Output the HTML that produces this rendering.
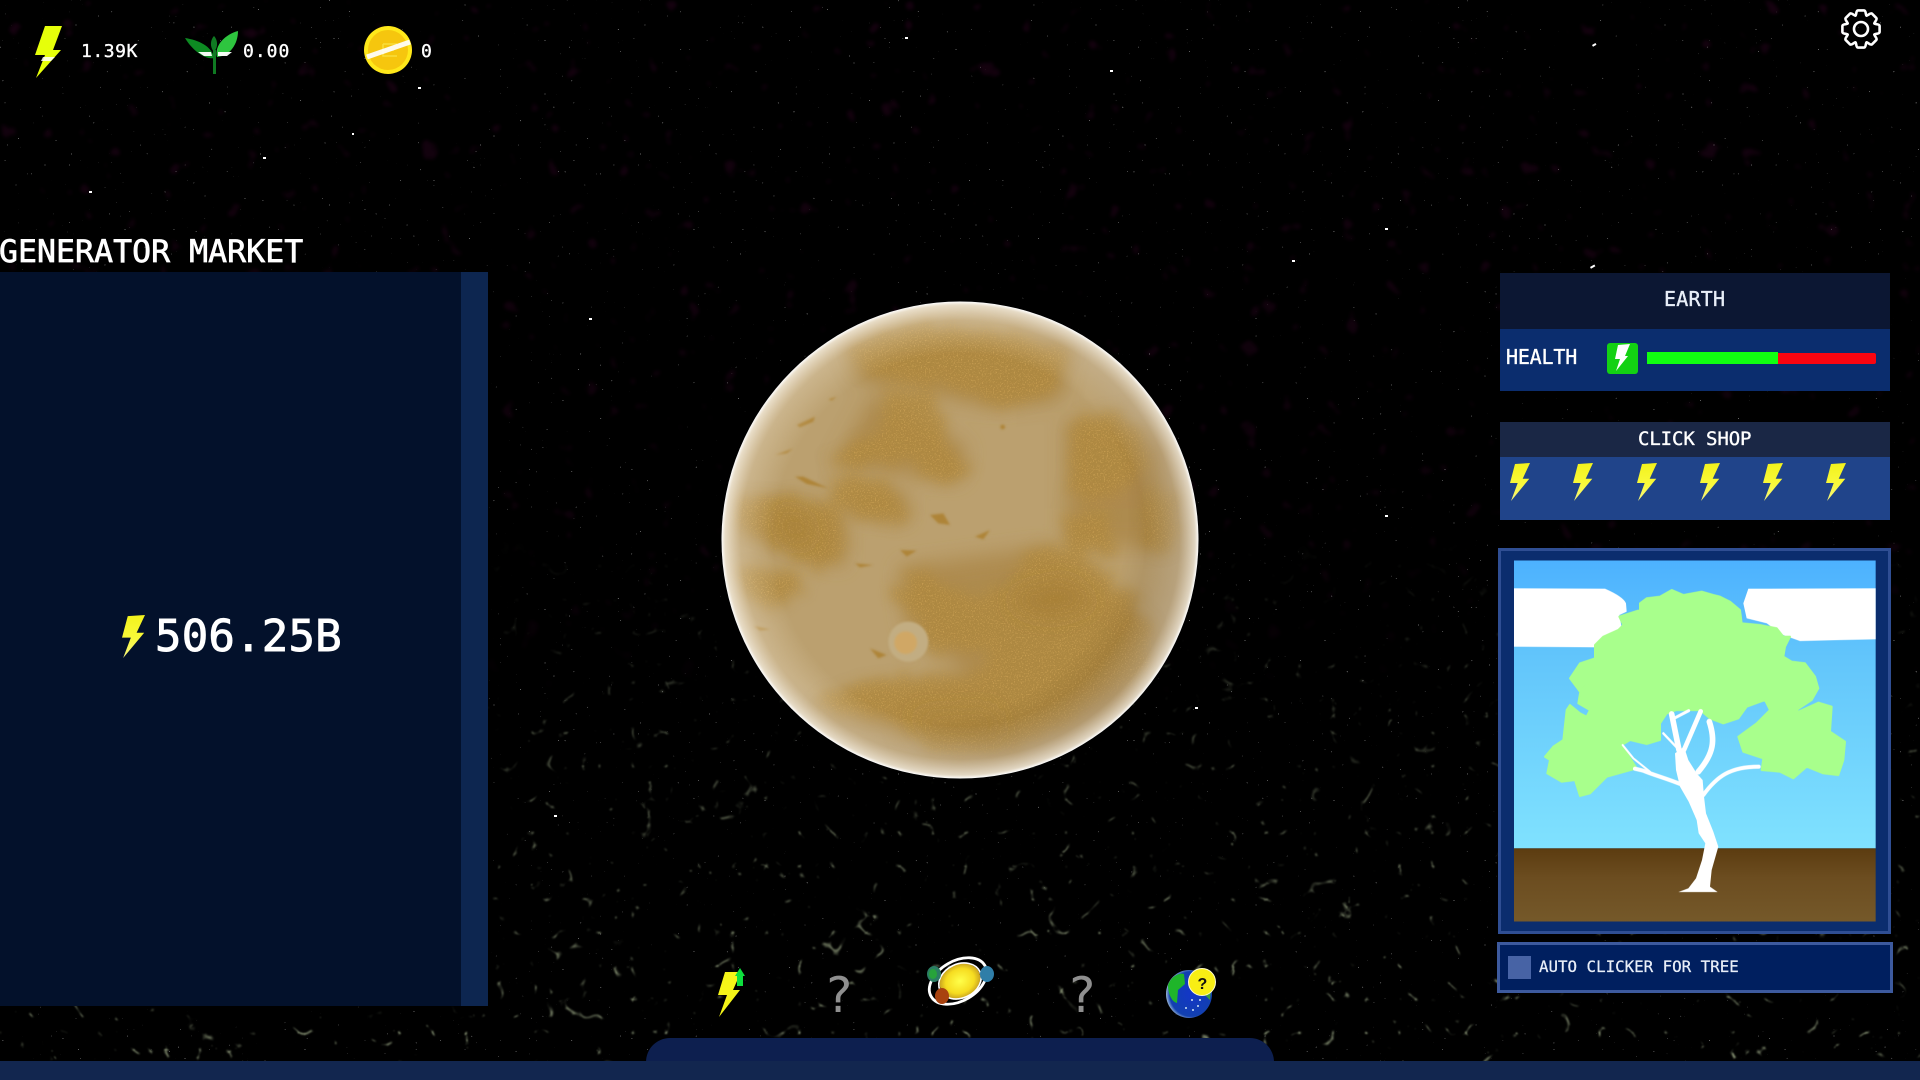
<!DOCTYPE html>
<html lang="en">
<head>
<meta charset="utf-8">
<title>Planet Clicker</title>
<style>
html,body{margin:0;padding:0;width:1920px;height:1080px;overflow:hidden;background:#000}
.a{position:absolute}
svg{position:absolute;left:0;top:0}
text{font-family:"DejaVu Sans Mono","Liberation Mono",monospace;fill:#fff}
.t{stroke:#fff;stroke-width:.35}
</style>
</head>
<body>
<svg width="1920" height="1080" viewBox="0 0 1920 1080" style="z-index:0">
<defs>
<filter id="veins" x="0" y="0" width="1" height="1" filterUnits="objectBoundingBox" color-interpolation-filters="sRGB">
<feTurbulence type="turbulence" baseFrequency=".03" numOctaves="2" seed="7" result="t"/>
<feColorMatrix in="t" type="matrix" values="0 0 0 0 .72  0 0 0 0 .78  0 0 0 0 .62  -16 0 0 0 1.1" result="v"/>
<feTurbulence type="fractalNoise" baseFrequency=".05" numOctaves="2" seed="11"/>
<feColorMatrix type="matrix" values="0 0 0 0 1  0 0 0 0 1  0 0 0 0 1  10 0 0 0 -5.2" result="p"/>
<feComposite in="v" in2="p" operator="in"/>
<feGaussianBlur stdDeviation=".7"/>
</filter>
<filter id="mag" x="0" y="0" width="1" height="1" color-interpolation-filters="sRGB">
<feTurbulence type="fractalNoise" baseFrequency=".05" numOctaves="2" seed="3"/>
<feColorMatrix type="matrix" values="0 0 0 0 .3  0 0 0 0 .03  0 0 0 0 .22  10 0 0 0 -7"/>
<feGaussianBlur stdDeviation="1.5"/>
</filter>
<filter id="spk" x="0" y="0" width="1" height="1" color-interpolation-filters="sRGB">
<feTurbulence type="fractalNoise" baseFrequency=".45" numOctaves="1" seed="21"/>
<feColorMatrix type="matrix" values="0 0 0 0 1  0 0 0 0 1  0 0 0 0 1  30 0 0 0 -23"/>
</filter>
<linearGradient id="fadeLow" x1="0" y1="0" x2="0" y2="1">
<stop offset=".5" stop-color="#000"/><stop offset=".7" stop-color="#888"/><stop offset="1" stop-color="#fff"/>
</linearGradient>
<linearGradient id="fadeHigh" x1="0" y1="0" x2="0" y2="1">
<stop offset="0" stop-color="#fff"/><stop offset=".5" stop-color="#aaa"/><stop offset=".65" stop-color="#000"/>
</linearGradient>
<mask id="mLow" maskUnits="userSpaceOnUse" x="0" y="0" width="1920" height="1080"><rect width="1920" height="1080" fill="url(#fadeLow)"/></mask>
<mask id="mHigh" maskUnits="userSpaceOnUse" x="0" y="0" width="1920" height="1080"><rect width="1920" height="1080" fill="url(#fadeHigh)"/></mask>
</defs>
<rect width="1920" height="1080" fill="#000"/>
<g mask="url(#mHigh)"><rect width="1920" height="1080" fill="#000" filter="url(#mag)" opacity=".28"/></g>
<g mask="url(#mLow)"><rect width="1920" height="1080" fill="#000" filter="url(#veins)" opacity=".7"/></g>
<rect width="1920" height="1080" fill="#000" filter="url(#spk)" opacity=".4"/>
<g fill="#fff">
<rect x="89" y="191" width="3" height="2"/><rect x="263" y="157" width="3" height="2"/><rect x="418" y="87" width="3" height="2"/><rect x="352" y="133" width="2" height="2"/>
<rect x="1592" y="45" width="4" height="2" transform="rotate(-30 1592 45)"/><rect x="1590" y="267" width="5" height="2" transform="rotate(-30 1590 267)"/><rect x="1292" y="260" width="3" height="2"/><rect x="1385" y="228" width="3" height="2"/>
<rect x="589" y="318" width="3" height="2"/><rect x="1385" y="515" width="3" height="2"/><rect x="554" y="815" width="3" height="2"/><rect x="1195" y="707" width="3" height="2"/><rect x="905" y="37" width="3" height="2"/><rect x="1110" y="70" width="3" height="2"/>
</g>
</svg>

<div class="a" style="left:0;top:272px;width:461px;height:734px;background:#03112b;z-index:1"></div>
<div class="a" style="left:461px;top:272px;width:27px;height:734px;background:#0d2650;z-index:1"></div>

<div class="a" style="left:1500px;top:273px;width:390px;height:56px;background:#0c1733;z-index:1"></div>
<div class="a" style="left:1500px;top:329px;width:390px;height:62px;background:#0b2d6e;z-index:1"></div>
<div class="a" style="left:1607px;top:343px;width:31px;height:31px;background:#13d113;border-radius:3px;z-index:1"></div>
<div class="a" style="left:1647px;top:352px;width:131px;height:12px;background:#11ff11;z-index:1"></div>
<div class="a" style="left:1778px;top:353px;width:98px;height:11px;background:#fa0510;border-radius:0 2px 2px 0;z-index:1"></div>

<div class="a" style="left:1500px;top:422px;width:390px;height:35px;background:#1a2745;z-index:1"></div>
<div class="a" style="left:1500px;top:457px;width:390px;height:63px;background:#20448a;z-index:1"></div>

<div class="a" style="left:1498px;top:548px;width:387px;height:380px;background:#0b2d6e;border:3px solid #2f4e93;z-index:1"></div>
<div class="a" style="left:1497px;top:942px;width:390px;height:45px;background:#001f5f;border:3px solid #3d5a9e;z-index:1"></div>
<div class="a" style="left:1508px;top:956px;width:23px;height:23px;background:#4763a5;z-index:1"></div>

<div class="a" style="left:646px;top:1038px;width:628px;height:30px;background:#0d1f4f;border-radius:24px 24px 0 0;z-index:1"></div>
<div class="a" style="left:0;top:1061px;width:1920px;height:19px;background:#12264f;z-index:1"></div>

<svg width="1920" height="1080" viewBox="0 0 1920 1080" style="z-index:2">
<defs>
<linearGradient id="by" x1="0" y1="0" x2="0" y2="1"><stop offset="0" stop-color="#f2f21c"/><stop offset=".55" stop-color="#f9f93a"/><stop offset="1" stop-color="#f6f680"/></linearGradient>
<polygon id="bolt" points="5,1 20,0 12.7,15.7 19.3,15.7 1,38 7.7,20 0,20"/>
<linearGradient id="sky" x1="0" y1="0" x2="0" y2="1"><stop offset="0" stop-color="#4db2ff"/><stop offset=".35" stop-color="#63c6fb"/><stop offset="1" stop-color="#80e2ff"/></linearGradient>
<linearGradient id="soil" x1="0" y1="0" x2="0" y2="1"><stop offset="0" stop-color="#5c3c10"/><stop offset=".4" stop-color="#6c4d20"/><stop offset="1" stop-color="#75592a"/></linearGradient>
<radialGradient id="rim" cx=".5" cy=".5" r=".5">
<stop offset="0" stop-color="#fff" stop-opacity="0"/><stop offset=".78" stop-color="#f2e6cf" stop-opacity="0"/><stop offset=".92" stop-color="#efe3ce" stop-opacity=".3"/><stop offset=".985" stop-color="#f8f2e6" stop-opacity=".75"/><stop offset="1" stop-color="#fff" stop-opacity="1"/>
</radialGradient>
<radialGradient id="shade" cx=".42" cy=".45" r=".6">
<stop offset="0" stop-color="#000" stop-opacity="0"/><stop offset=".72" stop-color="#3a2208" stop-opacity="0"/><stop offset="1" stop-color="#3a2208" stop-opacity=".3"/>
</radialGradient>
<filter id="rough" x="-10%" y="-10%" width="120%" height="120%" color-interpolation-filters="sRGB">
<feTurbulence type="fractalNoise" baseFrequency=".03" numOctaves="4" seed="4" result="n"/>
<feDisplacementMap in="SourceGraphic" in2="n" scale="90" xChannelSelector="R" yChannelSelector="G"/>
<feGaussianBlur stdDeviation="19" result="b"/>
<feTurbulence type="fractalNoise" baseFrequency=".24" numOctaves="2" seed="9"/>
<feColorMatrix type="matrix" values="0 0 0 0 .8  0 0 0 0 .63  0 0 0 0 .32  5 0 0 0 -2.7"/>
<feComposite in2="b" operator="in" result="s"/>
<feMerge><feMergeNode in="b"/><feMergeNode in="s"/></feMerge>
</filter>
<filter id="soft" x="-30%" y="-30%" width="160%" height="160%"><feGaussianBlur stdDeviation="30"/></filter>
<filter id="st" x="-30%" y="-30%" width="160%" height="160%"><feGaussianBlur stdDeviation="3.5"/></filter>
<clipPath id="pc"><circle cx="960" cy="540" r="238"/></clipPath>
<radialGradient id="sun"><stop offset="0" stop-color="#ffff4a"/><stop offset=".7" stop-color="#f6dc20"/><stop offset="1" stop-color="#c9a320"/></radialGradient>
<radialGradient id="ea" cx=".55" cy=".5" r=".55"><stop offset="0" stop-color="#1336c8"/><stop offset=".85" stop-color="#1240b0"/><stop offset="1" stop-color="#9bb8d8"/></radialGradient>
</defs>

<!-- planet -->
<circle cx="960" cy="540" r="238" fill="#bba06f"/>
<g clip-path="url(#pc)">
<g transform="translate(700 280) scale(.33333)">
<g fill="#ad8a4e" filter="url(#soft)" opacity=".95">
<path d="M420 180 L1120 180 L1080 360 L880 380 L480 300Z"/>
<path d="M520 340 L800 500 L780 600 L400 560Z"/>
<path d="M120 660 L430 700 L430 860 L120 760Z"/>
<path d="M1100 420 L1400 480 L1400 800 L1100 800Z"/>
<path d="M600 860 L1040 800 L1340 1030 L1300 1280 L900 1420 L360 1300 L800 1180 L620 1040Z"/>
<path d="M420 620 L620 640 L620 720 L440 700Z"/>
</g>
<g fill="#ae883f" stroke="#ae883f" stroke-width="34" stroke-linejoin="round" filter="url(#rough)" opacity=".82">
<path d="M470 200 L640 150 L900 170 L1090 230 L1040 330 L900 360 L780 310 L600 290 L480 250Z"/>
<path d="M570 350 L690 350 L730 500 L790 570 L730 590 L620 530 L410 540 L560 470Z"/>
<path d="M420 610 L540 620 L620 710 L480 700 L400 650Z"/>
<path d="M130 680 L260 660 L400 700 L420 820 L350 850 L240 790 L130 720Z"/>
<path d="M130 880 L270 890 L300 930 L230 970 L140 930Z"/>
<path d="M1140 430 L1260 410 L1330 520 L1290 600 L1170 650 L1120 620Z"/>
<path d="M1100 720 L1210 700 L1220 800 L1110 790Z"/>
<path d="M1360 620 L1420 680 L1410 800 L1340 790Z"/>
<path d="M1000 820 L1130 820 L1280 960 L1300 1050 L1340 1030 L1330 1160 L1200 1230 L1080 1320 L900 1400 L700 1400 L560 1300 L370 1270 L530 1210 L810 1210 L880 1170 L890 1110 L700 1090 L680 1040 L600 950 L650 890 L820 980 L940 920Z"/>
</g>
<g fill="#a37c34" filter="url(#soft)">
<path d="M940 940 L1100 900 L1180 970 L1060 1010 L960 990Z" opacity=".6"/>
<path d="M230 690 L310 700 L340 790 L260 790Z" opacity=".5"/>
<path d="M640 1300 L880 1290 L900 1370 L700 1370Z" opacity=".4"/>
</g>
<g fill="#ae8438" filter="url(#st)">
<path d="M290 435 L345 410 L340 425 L300 442Z"/><path d="M225 525 L280 505 L260 520Z"/><path d="M285 590 L310 590 L385 625 L320 612Z"/><path d="M825 770 L870 750 L850 778Z"/><path d="M690 705 L730 700 L750 735 L715 730Z"/><path d="M600 810 L650 812 L620 830Z"/><path d="M465 850 L520 855 L480 862Z"/><path d="M510 1105 L560 1125 L535 1135Z"/><path d="M160 1038 L210 1048 L180 1052Z"/><circle cx="908" cy="441" r="7"/><path d="M385 358 L410 350 L395 362Z"/>
</g>
<circle cx="625" cy="1085" r="60" fill="#c2ad82" filter="url(#st)"/>
<circle cx="617" cy="1088" r="34" fill="#d0a765" filter="url(#st)"/>
</g>
</g>
<circle cx="960" cy="540" r="238" fill="url(#shade)"/>
<circle cx="960" cy="540" r="238.5" fill="url(#rim)"/>

<!-- top stats -->
<g>
<polygon points="45,26 62,26 53,50 61,50 36,78 45,55 35,55" fill="#e6ff0a"/>
<polygon points="43,57 55,57 51,61 41,61" fill="#fff" opacity=".85"/>
<text class="t" x="81" y="57" font-size="18" letter-spacing=".55">1.39K</text>
<path d="M214 58 C205 60 192 50 185 38 C198 40 212 46 214 58Z" fill="#0d8a22"/>
<path d="M217 57 C214 45 226 34 238 31 C238 44 230 56 217 57Z" fill="#2ec53f"/>
<path d="M214 52 C209 46 211 39 214 36 C217 39 219 46 214 52Z" fill="#0f7a22"/>
<rect x="213" y="50" width="3" height="24" fill="#0f7a22"/>
<path d="M198 52 L211 52 L212 56 L204 56Z M218 52 L232 52 L227 56 L218 56Z" fill="#fff" opacity=".95"/>
<text class="t" x="243" y="57" font-size="18" letter-spacing="1">0.00</text>
<circle cx="388" cy="50" r="24" fill="#ffe81a"/>
<circle cx="388" cy="50" r="20" fill="#f6c60e"/>
<path d="M383 44 H397 M383 44 V56 H397 M383 50 H394" stroke="#f9dd3c" stroke-width="1.5" fill="none"/>
<line x1="367" y1="57" x2="410" y2="42" stroke="#fff" stroke-width="5" opacity=".92"/>
<text class="t" x="421" y="57" font-size="18">0</text>
</g>

<!-- gear -->
<g transform="translate(1861 29)" fill="none" stroke="#fff" stroke-width="2.6" stroke-linecap="round" stroke-linejoin="round">
<path id="tooth" d="M-5.6 -13.4 C-4.4 -14 -5.2 -18.6 -3 -18.6 L3 -18.6 C5.2 -18.6 4.4 -14 5.6 -13.4"/>
<use href="#tooth" transform="rotate(45)"/><use href="#tooth" transform="rotate(90)"/><use href="#tooth" transform="rotate(135)"/><use href="#tooth" transform="rotate(180)"/><use href="#tooth" transform="rotate(225)"/><use href="#tooth" transform="rotate(270)"/><use href="#tooth" transform="rotate(315)"/>
<circle r="7"/>
</g>

<text class="t" x="-1" y="262" font-size="31.5" letter-spacing=".05" style="stroke-width:.7">GENERATOR MARKET</text>

<!-- market -->
<use href="#bolt" transform="translate(122 615) scale(1.15 1.13)" fill="url(#by)"/>
<text class="t" x="155" y="651" font-size="44" letter-spacing=".2" style="stroke-width:.9">506.25B</text>

<!-- earth -->
<text class="t" x="1664" y="306" font-size="20" letter-spacing=".2" style="stroke:#e8eef8;fill:#e8eef8">EARTH</text>
<text class="t" x="1506" y="364" font-size="20" letter-spacing="-.2">HEALTH</text>
<polygon points="1618,345 1630,344 1625,356 1628,356 1616,371 1620,359 1615,359" fill="#fff"/>

<text class="t" x="1638" y="445" font-size="19" letter-spacing="-.1">CLICK SHOP</text>
<use href="#bolt" x="1510" y="463" fill="url(#by)"/>
<use href="#bolt" x="1573" y="463" fill="url(#by)"/>
<use href="#bolt" x="1637" y="463" fill="url(#by)"/>
<use href="#bolt" x="1700" y="463" fill="url(#by)"/>
<use href="#bolt" x="1763" y="463" fill="url(#by)"/>
<use href="#bolt" x="1826" y="463" fill="url(#by)"/>

<!-- tree -->
<g transform="translate(1490 540) scale(.33333)">
<rect x="72" y="62" width="1085" height="863" fill="url(#sky)"/>
<rect x="72" y="925" width="1085" height="220" fill="url(#soil)"/>
<path d="M72 145 L345 146 Q400 170 408 190 L410 215 L388 225 L395 262 L340 290 L315 322 L72 320Z" fill="#fff"/>
<path d="M775 146 L1157 145 L1157 298 L1050 300 L930 303 L880 285 L830 250 L770 235 L760 190Z" fill="#fff"/>
<path fill="#a8ff8c" stroke="#a8ff8c" stroke-width="6" stroke-linejoin="round" d="M450 190 L470 175 L510 170 L545 150 L580 165 L635 155 L670 165 L690 170 L720 185 L750 210 L755 250 L810 255 L860 265 L880 290 L900 290 L885 320 L880 350 L905 365 L945 370 L975 410 L985 445 L965 480 L920 510 L925 515 L985 488 L1025 500 L1020 575 L1065 605 L1060 660 L1045 705 L1000 700 L950 680 L910 715 L870 695 L815 690 L820 655 L760 635 L745 590 L800 550 L840 510 L825 480 L770 500 L745 535 L700 550 L660 535 L630 510 L560 510 L530 520 L510 550 L510 600 L470 612 L420 600 L395 615 L440 685 L350 710 L300 760 L270 768 L255 720 L215 725 L172 700 L180 660 L165 650 L190 620 L220 600 L230 510 L240 495 L270 520 L290 530 L300 510 L265 490 L270 460 L295 430 L270 455 L240 415 L270 370 L315 355 L315 315 L340 290 L385 270 L400 255 L388 230 L450 210Z"/>
<path fill="#fff" d="M565 1056 L683 1056 L660 1040 L665 990 L685 920 L670 875 L648 820 L642 770 L638 720 L620 700 L595 660 L582 620 L555 640 L558 690 L570 740 L596 785 L620 840 L626 880 L646 910 L636 960 L618 1015 L595 1045Z"/>
<g fill="none" stroke="#fff" stroke-linecap="round">
<path d="M578 735 C530 715 490 705 460 692 L435 686" stroke-width="12"/>
<path d="M480 695 L430 655 L398 615" stroke-width="6"/>
<path d="M567 630 L545 522" stroke-width="17"/>
<path d="M552 535 L596 512" stroke-width="9"/>
<path d="M520 580 L560 622" stroke-width="7"/>
<path d="M582 630 L632 514" stroke-width="14"/>
<path d="M625 695 C672 640 676 600 658 545" stroke-width="17"/>
<path d="M640 765 C680 710 720 680 806 680" stroke-width="12"/>
</g>
</g>
<text class="t" x="1539" y="972" font-size="15.8" style="stroke:#e8eef8;fill:#e8eef8;stroke-width:.25">AUTO CLICKER FOR TREE</text>

<!-- bottom icons -->
<polygon points="725,972 741,972 733,990 740,990 719,1017 727,995 718,995" fill="#f5f518"/>
<polygon points="740,968 745,976 743,976 743,986 737,986 737,976 735,976" fill="#0ddf3d"/>
<text x="824" y="1012" font-size="49" style="fill:#8f8f8f">?</text>
<text x="1067" y="1012" font-size="49" style="fill:#8f8f8f">?</text>
<ellipse cx="960" cy="981" rx="21" ry="17" fill="url(#sun)" transform="rotate(-25 960 981)"/>
<ellipse cx="960" cy="981" rx="22" ry="17" fill="none" stroke="#fff" stroke-width="1.6" transform="rotate(-25 960 981)"/>
<ellipse cx="958" cy="981" rx="31" ry="20" fill="none" stroke="#fff" stroke-width="2.8" transform="rotate(-30 958 981)"/>
<ellipse cx="934" cy="974" rx="7" ry="8" fill="#2b7d63"/><ellipse cx="933" cy="974" rx="4" ry="5" fill="#27a33a"/>
<ellipse cx="987" cy="974" rx="7" ry="8" fill="#2f7ea8"/>
<ellipse cx="942" cy="996" rx="7" ry="8" fill="#a8420f"/>
<ellipse cx="1189" cy="994" rx="23" ry="24" fill="url(#ea)"/>
<path d="M1168 985 C1172 975 1180 973 1184 974 L1185 984 L1178 990 L1177 1003 C1172 1002 1168 994 1168 985Z" fill="#1fb52a"/>
<path d="M1204 994 L1211 990 L1210 1000 Z" fill="#3aa03a"/>
<g fill="#cfe3f5"><circle cx="1192" cy="1000" r="1"/><circle cx="1198" cy="1006" r="1"/><circle cx="1186" cy="1008" r="1"/><circle cx="1200" cy="1000" r="1"/><circle cx="1193" cy="1010" r="1"/></g>
<circle cx="1202" cy="982" r="13.5" fill="#f8ee14" stroke="#fffbd0" stroke-width="1"/>
<text x="1197.5" y="989" font-size="16" font-weight="700" style="fill:#111;font-family:'Liberation Sans',sans-serif">?</text>
</svg>
</body>
</html>
